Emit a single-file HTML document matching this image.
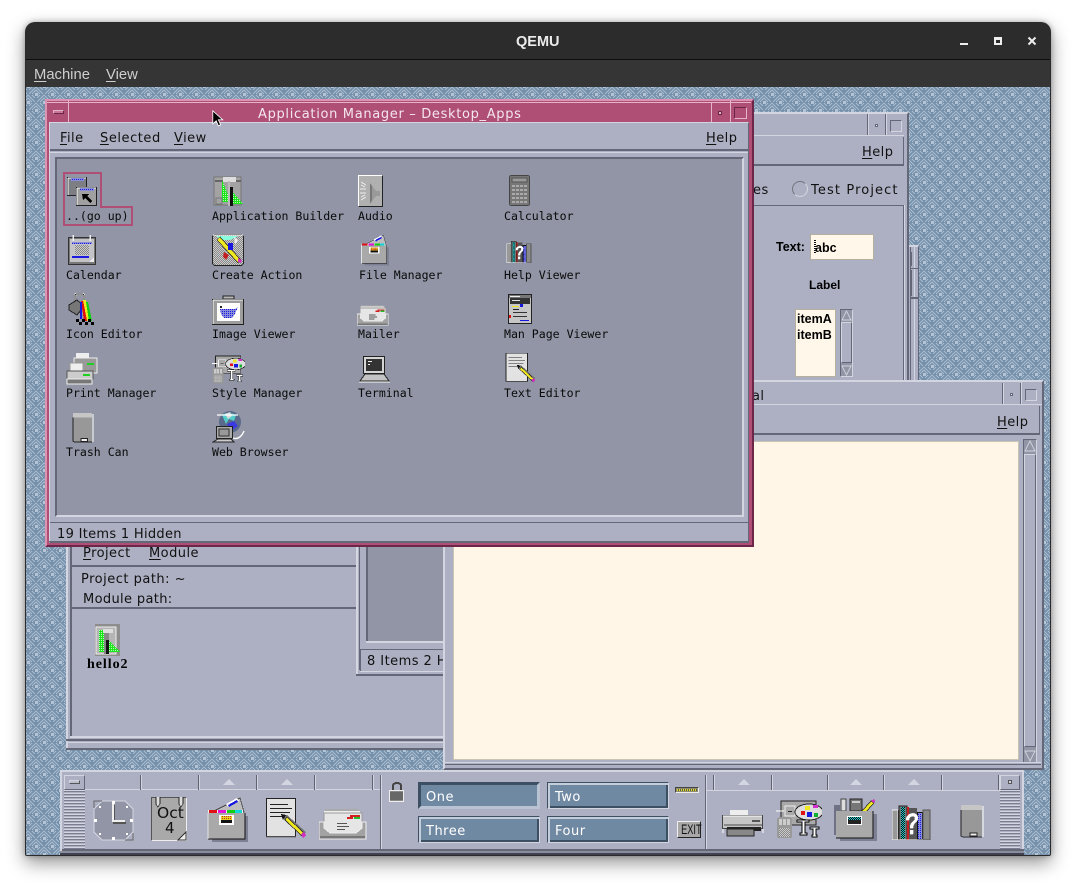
<!DOCTYPE html>
<html><head><meta charset="utf-8"><title>QEMU</title>
<style>
html,body{margin:0;padding:0;background:#fff}
body{width:1076px;height:884px;position:relative;overflow:hidden;font-family:"DejaVu Sans","Liberation Sans",sans-serif;font-size:13px;color:#111}
div,span.a,svg.a{position:absolute;box-sizing:border-box}
.t{position:absolute;white-space:nowrap;line-height:16px}
.m{font-family:"DejaVu Sans Mono","Liberation Mono",monospace;font-size:11.55px;color:#0a0a0a}
.u{font-size:13px;letter-spacing:.45px;color:#111}
u{text-underline-offset:2px}
.b{font-family:"Liberation Sans",sans-serif;font-weight:bold;font-size:12.5px;color:#000}
.base{background:#adb0c2}
.l{background:#d3d6e0}.d{background:#646777}
.ws{background:#7089a3;color:#fff;font-size:13px;letter-spacing:.5px;line-height:29px;padding-left:7px;border:1px solid;border-color:#3d4f62 #d3d6e0 #d3d6e0 #3d4f62;box-shadow:inset 2px 2px 0 #c4cedb,inset -2px -2px 0 #3d4f62}
.ws.on{border:3px solid;border-color:#3d4f62 #b8c2d2 #b8c2d2 #3d4f62;padding-left:5px;line-height:25px;box-shadow:none}
.sep{width:2px;height:15px;background:#5f6272;border-right:1px solid #d3d6e0;top:775px}
.tri{width:0;height:0;border-left:6px solid transparent;border-right:6px solid transparent;border-bottom:6px solid #d3d6e0;top:779px}
.hatch{background:repeating-linear-gradient(#d3d6e0 0 1px,#7a7d8d 1px 2px,#adb0c2 2px 3px)}
svg{shape-rendering:crispEdges}
</style></head><body>
<svg width="0" height="0" style="position:absolute"><defs>
<pattern id="weave" width="16" height="16" patternUnits="userSpaceOnUse" patternTransform="translate(10 7)">
<rect width="16" height="16" fill="#7590ab"/>
<g stroke="#a9bbcd" stroke-width="1" fill="none" shape-rendering="crispEdges">
<path d="M1 4L4 1M1 8L8 1M4 8L8 4M9 12L12 9M9 16L16 9M12 16L16 12M15 4L12 1M15 8L8 1M12 8L8 4M7 12L4 9M7 16L0 9M4 16L0 12"/></g>
<g fill="#b6c5d5"><rect x="7" y="7" width="3" height="3"/><rect width="2" height="2"/><rect x="15" width="1" height="2"/><rect y="15" width="2" height="1"/><rect x="15" y="15" width="1" height="1"/></g>
</pattern>
<pattern id="gd" width="2" height="2" patternUnits="userSpaceOnUse"><rect width="2" height="2" fill="#19e619"/><rect width="1" height="1" fill="#b8f8b8"/></pattern>
<pattern id="bd" width="2" height="2" patternUnits="userSpaceOnUse"><rect width="2" height="2" fill="#8a8ed8"/><rect width="1" height="1" fill="#1a1ae0"/></pattern>
<pattern id="cd" width="2" height="2" patternUnits="userSpaceOnUse"><rect width="2" height="2" fill="#111"/><rect width="1" height="1" fill="#2cc"/><rect x="1" y="1" width="1" height="1" fill="#2cc"/></pattern>
<pattern id="gr" width="2" height="2" patternUnits="userSpaceOnUse"><rect width="2" height="2" fill="#888"/><rect width="1" height="1" fill="#ccc"/><rect x="1" y="1" width="1" height="1" fill="#ccc"/></pattern>
<pattern id="yd" width="2" height="2" patternUnits="userSpaceOnUse"><rect width="2" height="2" fill="#e8d020"/><rect width="1" height="1" fill="#c03020"/></pattern>

<symbol id="fm" viewBox="0 0 42 47">
<rect x="6" y="20" width="36" height="26" fill="#7d8092"/>
<path d="M10 14L34 2l4 14z" fill="#bdbdbd" stroke="#333" stroke-width=".7"/><path d="M20 8l11-6 2 3-11 6z" fill="#fff"/><path d="M22 9l9-5 1 2-9 5z" fill="#1717e0"/>
<path d="M2 14h35v4H2z" fill="#eee"/><rect x="3" y="14" width="8" height="3" fill="#e01010"/><rect x="12" y="14" width="8" height="3" fill="#e010d8"/><rect x="21" y="14" width="8" height="3" fill="#10d010"/><rect x="29" y="14" width="7" height="3" fill="#10d8d8"/>
<rect x="2" y="17" width="37" height="26" fill="#a9a9a9"/><path d="M2 43h37V17" fill="none" stroke="#111" stroke-width="1.2"/><path d="M2 43V17" fill="none" stroke="#e4e4e4"/>
<rect x="13" y="19" width="15" height="10" fill="#fff"/><rect x="15" y="20" width="11" height="4" fill="url(#yd)"/><rect x="15" y="24" width="11" height="3" fill="#111"/>
</symbol>
<symbol id="mail" viewBox="0 0 48 33">
<path d="M6 2h34v5H6z" fill="#aaa"/><path d="M5 4h36v2H5z" fill="#eee"/>
<rect x="5" y="6" width="38" height="22" fill="#e6e6e6" stroke="#999"/><rect x="31" y="8" width="10" height="2" fill="#d02020"/><rect x="35" y="10" width="6" height="2" fill="#20c030"/><rect x="28" y="10" width="6" height="2" fill="#d02020"/>
<rect x="18" y="16" width="10" height="1" fill="#555"/><rect x="18" y="19" width="12" height="1" fill="#555"/><rect x="18" y="22" width="8" height="1" fill="#555"/>
<path d="M0 15v17h47V15h-4v6L37 26H11L5 21v-6z" fill="#a2a2a2" stroke="#eee"/><path d="M1 29h45v3H1z" fill="#777"/><path d="M0 32h47" stroke="#eee"/>
</symbol>
<symbol id="note" viewBox="0 0 40 42">
<rect x=".5" y=".5" width="29" height="38" fill="#e2e2e2" stroke="#222"/><path d="M0 39h30" stroke="#777"/>
<g fill="#222"><rect x="4" y="6" width="18" height="1"/><rect x="4" y="10" width="22" height="1"/><rect x="4" y="14" width="20" height="1"/><rect x="4" y="18" width="12" height="1"/></g>
<path d="M17 18l4-1 19 17-3 5-19-17z" fill="#777"/><path d="M21 19L38 35l-2 3L19 22z" fill="#f0e820" stroke="#222" stroke-width=".7"/><path d="M15 16l5 1-3 5z" fill="#111"/><path d="M35 36l3-2 2 3-3 3z" fill="#d030c0"/>
</symbol>
<symbol id="style" viewBox="0 0 46 38">
<rect x="5" y="1" width="35" height="24" fill="#a9a9a9" stroke="#222"/><rect x="9" y="6" width="10" height="10" fill="#aaa" stroke="#eee"/><rect x="12" y="11" width="4" height="1" fill="#222"/><path d="M0 11h8" stroke="#fff" stroke-width="1.4"/>
<ellipse cx="33" cy="12" rx="14" ry="8" fill="#ddd" stroke="#222"/><rect x="25" y="11" width="4" height="4" fill="#e01010"/><rect x="29" y="6" width="5" height="4" fill="#f0e820"/><rect x="37" y="5" width="5" height="3" fill="#d030d0"/><rect x="31" y="12" width="5" height="5" fill="#1717e0"/><rect x="38" y="13" width="4" height="4" fill="#10b030"/>
<rect x="1" y="17" width="15" height="22" rx="3" fill="#999"/><rect x="3" y="19" width="3" height="6" fill="#ccc"/><rect x="7" y="19" width="3" height="6" fill="#ccc"/><rect x="11" y="19" width="3" height="6" fill="#ccc"/><rect x="3" y="28" width="11" height="9" fill="url(#gr)"/>
<path d="M21 20h12v2h-4v11h2v2h-7v-2h2V22h-5zM34 27h9v2h-3v6h1v2h-5v-2h1v-6h-3z" fill="#fff" stroke="#000" stroke-width=".6"/>
</symbol>
<symbol id="help" viewBox="0 0 40 36">
<rect x="0" y="6" width="6" height="30" fill="#999" stroke="#eee"/><rect x="6" y="6" width="2" height="30" fill="#333"/><rect x="7" y="2" width="8" height="34" fill="#777" stroke="#222"/><rect x="9" y="3" width="4" height="32" fill="url(#cd)"/><rect x="15" y="3" width="2" height="33" fill="#c02020"/><rect x="17" y="4" width="8" height="32" fill="#555"/><rect x="25" y="8" width="6" height="28" fill="#111"/><rect x="26" y="9" width="4" height="26" fill="url(#bd)"/><rect x="31" y="6" width="7" height="30" fill="#8a8a8a" stroke="#555"/><path d="M0 36h31" stroke="#fff" stroke-width="1.5"/>
<path d="M14 16c0-8 12-9 12-2 0 5-5 4-5 10h-3c0-7 5-6 5-10 0-3-6-2-6 2zM18 26h3v4h-3z" fill="#fff" stroke="#eee" stroke-width=".4"/>
</symbol>
<symbol id="trash" viewBox="0 0 24 34">
<path d="M1 2q0-1 1-1h18q2 0 2 2v3H1z" fill="#c6c6c6"/><rect x="1" y="6" width="21" height="26" fill="#989898"/><path d="M1 6v26l2 1h19" fill="none" stroke="#222"/><path d="M23 2v31" stroke="#fff"/><rect x="10" y="29" width="7" height="3" fill="#eee" stroke="#222"/>
</symbol>
</defs></svg>

<!-- QEMU outer window -->
<div style="left:25px;top:22px;width:1026px;height:834px;border-radius:10px 10px 2px 2px;background:#2b2b2b;box-shadow:0 7px 18px rgba(0,0,0,.42),0 0 6px rgba(0,0,0,.28)"></div>
<div style="left:26px;top:23px;width:1024px;height:36px;background:#2c2c2c;border-radius:9px 9px 0 0"></div>
<div style="left:26px;top:59px;width:1024px;height:1px;background:#0e0e0e"></div>
<div style="left:26px;top:60px;width:1024px;height:27px;background:#353535"></div>
<span class="t" style="left:516px;top:33px;color:#ececec;font:bold 14.5px/18px 'Liberation Sans',sans-serif">QEMU</span>
<div style="left:960px;top:43px;width:8px;height:2px;background:#eee"></div>
<div style="left:994px;top:37px;width:8px;height:8px;border:2px solid #eee;border-top-width:3px"></div>
<svg class="a" style="left:1027px;top:36px;shape-rendering:auto" width="10" height="10"><path d="M1.5 1.5l7 7M8.5 1.5l-7 7" stroke="#eee" stroke-width="2"/></svg>
<span class="t" style="left:34px;top:66px;color:#cfcfcf;font:14.8px/18px 'Liberation Sans',sans-serif"><u>M</u>achine</span>
<span class="t" style="left:106px;top:66px;color:#cfcfcf;font:14.8px/18px 'Liberation Sans',sans-serif"><u>V</u>iew</span>

<!-- desktop -->
<svg class="a" style="left:26px;top:87px" width="1024" height="768"><rect width="1024" height="768" fill="url(#weave)"/></svg>

<!-- bottom-left App Builder window -->
<div class="base" style="left:66px;top:540px;width:380px;height:210px"></div>
<div class="l" style="left:66px;top:540px;width:2px;height:210px"></div>
<div class="d" style="left:70px;top:540px;width:2px;height:197px"></div>
<div class="d" style="left:72px;top:565px;width:372px;height:2px"></div>
<span class="t u" style="left:83px;top:546px"><u>P</u>roject</span>
<span class="t u" style="left:149px;top:546px"><u>M</u>odule</span>
<span class="t u" style="left:81px;top:572px;letter-spacing:.5px">Project path: ~</span>
<span class="t u" style="left:83px;top:592px;letter-spacing:.35px">Module path:</span>
<div class="d" style="left:71px;top:607px;width:373px;height:2px"></div>
<div class="l" style="left:70px;top:736px;width:374px;height:2px"></div>
<div class="d" style="left:66px;top:739px;width:378px;height:2px"></div>
<div class="l" style="left:68px;top:742px;width:376px;height:1px"></div>
<div class="d" style="left:66px;top:748px;width:378px;height:2px"></div>
<div style="left:95px;top:624px;width:25px;height:32px;background:#8d8d8d"></div>
<svg class="a" style="left:95px;top:624px" width="25" height="32"><rect x="1" y="3" width="20" height="27" fill="#b5b5b5" stroke="#eee"/><path d="M4 6h6v22H4zM11 14l14 14H11z" fill="url(#gd)"/><rect x="8" y="5" width="10" height="4" fill="#ddd"/><rect x="9" y="9" width="5" height="21" fill="#888"/><rect x="11" y="16" width="3" height="14" fill="#111"/></svg>
<span class="t" style="left:87px;top:657px;font:bold 14px/16px 'Liberation Serif',serif;letter-spacing:.95px;color:#000">hello2</span>

<!-- middle window -->
<div class="base" style="left:356px;top:540px;width:90px;height:136px"></div>
<div class="l" style="left:356px;top:540px;width:2px;height:135px"></div>
<div class="d" style="left:359px;top:540px;width:1px;height:130px"></div>
<div style="left:366px;top:540px;width:80px;height:102px;background:#9195a5;border-left:2px solid #646777"></div>
<div class="l" style="left:366px;top:641px;width:80px;height:2px"></div>
<div class="d" style="left:360px;top:649px;width:84px;height:1px"></div>
<div class="d" style="left:360px;top:650px;width:1px;height:21px"></div>
<span class="t u" style="left:367px;top:654px">8 Items 2 H</span>
<div class="l" style="left:360px;top:671px;width:84px;height:1px"></div>
<div class="d" style="left:356px;top:674px;width:88px;height:2px"></div>

<!-- slice window at right of win1 -->
<div class="base" style="left:905px;top:245px;width:14px;height:140px;border-top:2px solid #d3d6e0;border-right:1px solid #646777"></div>
<div class="d" style="left:910px;top:247px;width:1px;height:136px"></div>
<div class="l" style="left:914px;top:247px;width:1px;height:136px"></div>
<div class="d" style="left:910px;top:268px;width:8px;height:1px"></div>
<div class="d" style="left:910px;top:297px;width:8px;height:2px"></div>
<div class="d" style="left:910px;top:252px;width:2px;height:14px"></div>
<div class="d" style="left:910px;top:270px;width:2px;height:26px"></div>

<!-- win1 -->
<div class="base" style="left:700px;top:112px;width:209px;height:272px;border-top:2px solid #d3d6e0;border-right:2px solid #646777"></div>
<div class="l" style="left:704px;top:135px;width:200px;height:1px"></div>
<div class="d" style="left:867px;top:114px;width:1px;height:21px"></div>
<div class="l" style="left:868px;top:114px;width:1px;height:21px"></div>
<div class="d" style="left:885px;top:114px;width:1px;height:21px"></div>
<div class="l" style="left:886px;top:114px;width:1px;height:21px"></div>
<div style="left:875px;top:124px;width:3px;height:3px;background:#e8e9ef;border:1px solid #646777"></div>
<div style="left:890px;top:120px;width:12px;height:12px;border:1px solid;border-color:#646777 #d3d6e0 #d3d6e0 #646777"></div>
<div class="d" style="left:740px;top:164px;width:164px;height:2px"></div>
<div class="d" style="left:903px;top:137px;width:1px;height:29px"></div>
<span class="t u" style="left:862px;top:145px"><u>H</u>elp</span>
<span class="t u" style="left:753px;top:183px">es</span>
<div style="left:792px;top:181px;width:16px;height:16px;border-radius:50%;border:1px solid #70737f;border-right-color:#d3d6e0;border-bottom-color:#d3d6e0"></div>
<span class="t u" style="left:811px;top:183px;letter-spacing:1.12px">Test Project</span>
<div class="d" style="left:740px;top:205px;width:164px;height:1px"></div>
<div class="d" style="left:903px;top:205px;width:1px;height:180px"></div>
<div class="l" style="left:904px;top:205px;width:1px;height:180px"></div>
<span class="t b" style="left:776px;top:239px">Text:</span>
<div style="left:810px;top:234px;width:64px;height:26px;background:#fff8ea;border:1px solid #b5b09e"></div>
<span class="t b" style="left:815px;top:240px">abc</span>
<div style="left:814px;top:240px;width:2px;height:14px;background:repeating-linear-gradient(#111 0 1px,transparent 1px 2px)"></div>
<span class="t b" style="left:809px;top:277px;font-size:12px">Label</span>
<div style="left:795px;top:309px;width:41px;height:68px;background:#fff8ea;border:1px solid #b5b09e"></div>
<span class="t b" style="left:797px;top:311px;font-size:12.5px">itemA</span>
<span class="t b" style="left:797px;top:327px;font-size:12.5px">itemB</span>
<div style="left:840px;top:309px;width:13px;height:68px;background:#9195a5;border:1px solid;border-color:#646777 #d3d6e0 #d3d6e0 #646777"></div>
<div class="base" style="left:841px;top:322px;width:11px;height:41px;border:1px solid;border-color:#d3d6e0 #646777 #646777 #d3d6e0"></div>
<svg class="a" style="left:841px;top:310px" width="11" height="12"><path d="M5.5 1L10 10H1z" fill="#9195a5" stroke="#d3d6e0"/></svg>
<svg class="a" style="left:841px;top:364px" width="11" height="12"><path d="M5.5 11L10 2H1z" fill="#9195a5" stroke="#d3d6e0"/></svg>

<!-- terminal -->
<div class="base" style="left:443px;top:380px;width:601px;height:390px;border:2px solid;border-color:#d3d6e0 #646777 #646777 #d3d6e0"></div>
<div class="d" style="left:1002px;top:383px;width:1px;height:21px"></div>
<div class="l" style="left:1003px;top:383px;width:1px;height:21px"></div>
<div class="d" style="left:1020px;top:383px;width:1px;height:21px"></div>
<div class="l" style="left:1021px;top:380px;width:1px;height:24px"></div>
<div style="left:1010px;top:393px;width:3px;height:3px;background:#e8e9ef;border:1px solid #646777"></div>
<div style="left:1025px;top:389px;width:12px;height:12px;border:1px solid;border-color:#646777 #d3d6e0 #d3d6e0 #646777"></div>
<div class="l" style="left:445px;top:404px;width:597px;height:1px"></div>
<span class="t u" style="left:752px;top:389px">al</span>
<div class="d" style="left:445px;top:433px;width:595px;height:2px"></div>
<div class="d" style="left:1039px;top:406px;width:1px;height:29px"></div>
<span class="t u" style="left:997px;top:415px"><u>H</u>elp</span>
<div style="left:453px;top:441px;width:566px;height:319px;background:#fff6e8;border:1px solid #c9c3b3"></div>
<div style="left:1023px;top:439px;width:14px;height:324px;background:#9195a5;border:1px solid;border-color:#646777 #d3d6e0 #d3d6e0 #646777"></div>
<div class="base" style="left:1024px;top:454px;width:12px;height:293px;border:1px solid;border-color:#d3d6e0 #646777 #646777 #d3d6e0"></div>
<svg class="a" style="left:1024px;top:440px" width="12" height="13"><path d="M6 1L11 11H1z" fill="#9195a5" stroke="#d3d6e0"/></svg>
<svg class="a" style="left:1024px;top:749px" width="12" height="13"><path d="M6 12L11 2H1z" fill="#9195a5" stroke="#d3d6e0"/></svg>
<div class="l" style="left:445px;top:762px;width:596px;height:1px"></div>
<div class="d" style="left:445px;top:764px;width:596px;height:1px"></div>

<!-- App Manager -->
<div style="left:45px;top:99px;width:709px;height:448px;background:#b04f76;border:2px solid;border-color:#dd93b1 #6b2648 #6b2648 #dd93b1"></div>
<div style="left:47px;top:102px;width:704px;height:1px;background:#e4b4c8"></div>
<div style="left:68px;top:100px;width:1px;height:22px;background:#e4b4c8"></div>
<div style="left:711px;top:103px;width:1px;height:19px;background:#e4b4c8"></div>
<div style="left:730px;top:100px;width:1px;height:22px;background:#e4b4c8"></div>
<div style="left:53px;top:110px;width:11px;height:4px;background:#c9769a;border:1px solid;border-color:#e4b4c8 #6b2648 #6b2648 #e4b4c8"></div>
<div style="left:718px;top:111px;width:4px;height:4px;background:#e4b4c8;border:1px solid #6b2648"></div>
<div style="left:734px;top:107px;width:13px;height:12px;border:1px solid;border-color:#6b2648 #e4b4c8 #e4b4c8 #6b2648"></div>
<span class="t" style="left:258px;top:107px;color:#f3e6ec;font-size:13px;letter-spacing:.67px">Application Manager – Desktop_Apps</span>
<div class="base" style="left:49px;top:122px;width:700px;height:421px;border:1px solid;border-color:#d3d6e0 #646777 #646777 #d3d6e0"></div>
<div class="d" style="left:50px;top:149px;width:698px;height:2px"></div>
<div class="l" style="left:50px;top:152px;width:698px;height:1px"></div>
<span class="t u" style="left:60px;top:131px"><u>F</u>ile</span>
<span class="t u" style="left:100px;top:131px;letter-spacing:.55px"><u>S</u>elected</span>
<span class="t u" style="left:174px;top:131px"><u>V</u>iew</span>
<span class="t u" style="left:706px;top:131px"><u>H</u>elp</span>
<div style="left:55px;top:157px;width:689px;height:360px;background:#9195a5;border:2px solid;border-color:#646777 #d3d6e0 #d3d6e0 #646777"></div>
<div class="d" style="left:50px;top:522px;width:698px;height:1px"></div>
<div class="d" style="left:49px;top:541px;width:700px;height:1px"></div>
<span class="t u" style="left:57px;top:527px;letter-spacing:.3px">19 Items 1 Hidden</span>

<!-- focus outline -->
<svg class="a" style="left:60px;top:170px" width="76" height="58"><path d="M4 3h37v34h31v18H4z" fill="none" stroke="#b04f76" stroke-width="2"/></svg>

<!-- labels -->
<span class="t m" style="left:66px;top:208px">..(go up)</span>
<span class="t m" style="left:212px;top:208px">Application Builder</span>
<span class="t m" style="left:358px;top:208px">Audio</span>
<span class="t m" style="left:504px;top:208px">Calculator</span>
<span class="t m" style="left:66px;top:267px">Calendar</span>
<span class="t m" style="left:212px;top:267px">Create Action</span>
<span class="t m" style="left:359px;top:267px">File Manager</span>
<span class="t m" style="left:504px;top:267px">Help Viewer</span>
<span class="t m" style="left:66px;top:326px">Icon Editor</span>
<span class="t m" style="left:212px;top:326px">Image Viewer</span>
<span class="t m" style="left:358px;top:326px">Mailer</span>
<span class="t m" style="left:504px;top:326px">Man Page Viewer</span>
<span class="t m" style="left:66px;top:385px">Print Manager</span>
<span class="t m" style="left:212px;top:385px">Style Manager</span>
<span class="t m" style="left:358px;top:385px">Terminal</span>
<span class="t m" style="left:504px;top:385px">Text Editor</span>
<span class="t m" style="left:66px;top:444px">Trash Can</span>
<span class="t m" style="left:212px;top:444px">Web Browser</span>

<!-- desktop icons -->
<svg class="a" style="left:66px;top:175px" width="32" height="32"><rect x="1.5" y="2.5" width="19" height="18" fill="#7d7e84" stroke="#222"/><path d="M2 3h18M2 3v17" stroke="#fff"/><rect x="5" y="3" width="13" height="3" fill="url(#bd)"/><rect x="10.5" y="12.5" width="20" height="18" fill="#a0a0a0" stroke="#222"/><path d="M11 13h19M11 13v17" stroke="#fff"/><rect x="14" y="13" width="14" height="3" fill="url(#bd)"/><path d="M16 19h7l-2 2 5 5-2 2-5-5-2 2z" fill="#000"/></svg>
<svg class="a" style="left:213px;top:176px" width="32" height="31"><rect x="1" y="1" width="27" height="28" fill="#a3a3a3" stroke="#777"/><rect x="2" y="4" width="26" height="2" fill="#666"/><path d="M9 4l9 22H9z" fill="url(#gd)"/><path d="M20 16l10 12H20z" fill="url(#gd)"/><rect x="10" y="1" width="13" height="5" fill="#ddd"/><rect x="17" y="11" width="3" height="19" fill="#111"/><rect x="15" y="5" width="2" height="25" fill="#bbb"/><rect x="3" y="22" width="6" height="6" fill="none" stroke="#777"/></svg>
<svg class="a" style="left:358px;top:175px" width="26" height="33"><rect x=".5" y=".5" width="24" height="31" fill="#b0b0b0"/><path d="M.5 31.5V.5h24" fill="none" stroke="#fff"/><path d="M.5 31.5h24V.5" fill="none" stroke="#222"/><path d="M12 8l6 8h4v5h-4l-6 8z" fill="#999"/><path d="M12 8l2 3v14l-2 4z" fill="#777"/><g stroke="#eee"><path d="M3 7l5 3M2 14h6M2 18h6M3 25l5-3M3 10l4 2M3 22l4-2"/></g></svg>
<svg class="a" style="left:509px;top:175px" width="23" height="32"><rect x=".5" y=".5" width="20" height="30" rx="2" fill="#777" stroke="#444"/><rect x="3" y="3" width="15" height="4" fill="#999" stroke="#555"/><g fill="#aaa"><rect x="3" y="10" width="3" height="2"/><rect x="7" y="10" width="3" height="2"/><rect x="11" y="10" width="3" height="2"/><rect x="15" y="10" width="3" height="2"/><rect x="3" y="14" width="3" height="2"/><rect x="7" y="14" width="3" height="2"/><rect x="11" y="14" width="3" height="2"/><rect x="15" y="14" width="3" height="2"/><rect x="3" y="18" width="3" height="2"/><rect x="7" y="18" width="3" height="2"/><rect x="11" y="18" width="3" height="2"/><rect x="15" y="18" width="3" height="2"/><rect x="3" y="22" width="3" height="2"/><rect x="7" y="22" width="3" height="2"/><rect x="11" y="22" width="3" height="2"/><rect x="15" y="22" width="3" height="2"/><rect x="3" y="26" width="3" height="2"/><rect x="7" y="26" width="3" height="2"/><rect x="11" y="26" width="3" height="2"/><rect x="15" y="26" width="3" height="2"/></g></svg>
<svg class="a" style="left:68px;top:235px" width="29" height="31"><rect x=".5" y="2.5" width="27" height="27" fill="#777" stroke="#333"/><rect x="2" y="4" width="24" height="23" fill="#c4c4c8"/><rect x="4" y="7" width="20" height="2" fill="url(#bd)"/><rect x="7" y="10" width="14" height="10" fill="url(#gr)"/><rect x="4" y="21" width="17" height="2" fill="#1a1ae0"/><path d="M26 27l-5 0 5-5z" fill="#eee"/><path d="M5 0v6M22 0v6" stroke="#eee" stroke-width="1.5"/></svg>
<svg class="a" style="left:212px;top:234px" width="33" height="33"><rect x=".5" y=".5" width="31" height="31" rx="3" fill="url(#gr)" stroke="#222"/><path d="M1 1h30" stroke="#fff"/><path d="M4 2h22l-8 4h-8z" fill="#8fd"/><path d="M8 3l21 23-3 3L5 6z" fill="#f0e820" stroke="#222" stroke-width=".7"/><path d="M16 9h5v7h-5z" fill="#1717e0"/><path d="M12 18l5 3-3 5-3-3z" fill="#c02020"/><path d="M26 24l4 2-1 3-3-1z" fill="#d030c0"/><path d="M22 3l4 3-3 5z" fill="#eee"/></svg>
<svg class="a" style="left:360px;top:234px" width="29" height="32"><use href="#fm" width="29" height="32"/></svg>
<svg class="a" style="left:506px;top:240px" width="27" height="23"><use href="#help" width="27" height="23"/></svg>
<svg class="a" style="left:68px;top:293px" width="29" height="32"><path d="M7 9V3q0-2 2-2h5q2 0 2 2v8" fill="none" stroke="#fff" stroke-width="2"/><path d="M7 9V3q0-2 2-2h5q2 0 2 2v8" fill="none" stroke="#222"/><path d="M1 12l8-5 7 6-7 9-8-5z" fill="#777" stroke="#222"/><path d="M13 8h4l3 20h-4z" fill="#e01010"/><path d="M15 7h3l4 21h-3z" fill="#f0e820"/><path d="M18 9h2l4 19h-3z" fill="#10d010"/><path d="M12 9h2v17h-2z" fill="#1717e0"/><g fill="#000"><rect x="8" y="26" width="3" height="3"/><rect x="14" y="26" width="3" height="3"/><rect x="20" y="26" width="3" height="3"/><rect x="11" y="29" width="3" height="3"/><rect x="17" y="29" width="3" height="3"/><rect x="23" y="29" width="3" height="3"/></g></svg>
<svg class="a" style="left:212px;top:295px" width="33" height="31"><path d="M11 5l5-3 5 3" fill="none" stroke="#222"/><rect x="11" y="1" width="11" height="3" fill="#bbb" stroke="#222"/><rect x=".5" y="4.5" width="31" height="25" fill="#9d9d9d" stroke="#222"/><path d="M1 5h30M1 5v24" stroke="#fff"/><rect x="5" y="8" width="23" height="18" fill="#fff"/><path d="M8 14h15l3-2-3 7-3 4h-8l-3-4z" fill="url(#bd)"/><rect x="8" y="11" width="2" height="2" fill="#222"/></svg>
<svg class="a" style="left:357px;top:302px" width="32" height="26"><use href="#mail" width="32" height="26"/></svg>
<svg class="a" style="left:508px;top:294px" width="25" height="31"><rect x=".5" y=".5" width="23" height="29" fill="#c6c6c6" stroke="#222"/><rect x="1" y="1" width="22" height="3" fill="#777"/><rect x="2" y="4" width="20" height="6" fill="#333"/><rect x="4" y="6" width="8" height="1" fill="#ddd"/><rect x="2" y="2" width="10" height="1" fill="#eee"/><rect x="4" y="12" width="7" height="1" fill="#f0e820"/><rect x="12" y="10" width="3" height="3" fill="#1717e0"/><rect x="5" y="15" width="6" height="1" fill="#222"/><rect x="5" y="18" width="14" height="1" fill="#333"/><rect x="1" y="21" width="2" height="3" fill="#e01010"/><rect x="5" y="22" width="14" height="1" fill="#333"/><rect x="12" y="26" width="9" height="1" fill="#1717e0"/></svg>
<svg class="a" style="left:66px;top:353px" width="32" height="32"><rect x="10" y="0" width="13" height="9" fill="#eee"/><rect x="8" y="5" width="23" height="15" fill="#999" stroke="#eee"/><rect x="21" y="10" width="7" height="2" fill="#20d020"/><rect x="4" y="10" width="13" height="10" fill="#eee" stroke="#999"/><rect x="1" y="18" width="26" height="8" fill="#ccc" stroke="#555"/><rect x="17" y="21" width="7" height="2" fill="#20d020"/><rect x="1" y="26" width="25" height="5" fill="#777" stroke="#eee"/></svg>
<svg class="a" style="left:212px;top:353px" width="33" height="32"><use href="#style" width="33" height="32"/></svg>
<svg class="a" style="left:358px;top:355px" width="33" height="28"><rect x="5.5" y="1.5" width="21" height="17" fill="#d6d6d6" stroke="#222"/><rect x="8" y="4" width="16" height="12" fill="#333"/><rect x="10" y="6" width="4" height="1" fill="#eee"/><rect x="10" y="9" width="2" height="1" fill="#eee"/><path d="M7 19h19l5 7H2z" fill="#c4c4c4" stroke="#222"/><path d="M1 27h31" stroke="#fff"/></svg>
<svg class="a" style="left:505px;top:353px" width="31" height="31"><use href="#note" width="31" height="31"/></svg>
<svg class="a" style="left:72px;top:411px" width="22" height="33"><use href="#trash" width="22" height="33"/></svg>
<svg class="a" style="left:212px;top:411px;shape-rendering:auto" width="33" height="33"><circle cx="18" cy="11" r="11" fill="#5a6a8a"/><path d="M10 4q6-4 14 0l-2 6-5-2-3 5z" fill="#5cc"/><path d="M15 13l7-3 4 5-7 5z" fill="#3a3ae0"/><path d="M13 3l5-2 2 4-4 3z" fill="#ddd"/><path d="M5 4h21" stroke="#fff" stroke-width="1.2"/><rect x="4.5" y="15.5" width="16" height="12" fill="#aaa" stroke="#222"/><rect x="7" y="18" width="10" height="7" fill="#999" stroke="#333"/><path d="M1 31l5-3h13l3 3z" fill="#ccc" stroke="#222"/><path d="M21 27c5 2 9-2 11-7" fill="none" stroke="#fff" stroke-width="1.4"/></svg>

<!-- front panel -->
<div class="base" style="left:60px;top:770px;width:964px;height:85px;border-top:2px solid #d3d6e0;border-left:2px solid #d3d6e0"></div>
<div class="d" style="left:62px;top:849px;width:962px;height:2px"></div>
<div style="left:60px;top:851px;width:964px;height:2px;background:#8a8d9c"></div>
<div style="left:60px;top:853px;width:964px;height:2px;background:#3f4250"></div>
<div class="l" style="left:1022px;top:772px;width:2px;height:77px"></div>
<div class="l" style="left:85px;top:789px;width:295px;height:1px"></div>
<div class="l" style="left:706px;top:790px;width:294px;height:1px"></div>
<div class="d" style="left:380px;top:775px;width:1px;height:74px"></div>
<div class="l" style="left:381px;top:775px;width:1px;height:74px"></div>
<div class="d" style="left:705px;top:775px;width:1px;height:74px"></div>
<div class="l" style="left:706px;top:775px;width:1px;height:74px"></div>
<div class="base" style="left:64px;top:775px;width:21px;height:15px;border:1px solid;border-color:#d3d6e0 #646777 #646777 #d3d6e0"></div>
<div style="left:69px;top:780px;width:11px;height:4px;background:#bcbfce;border:1px solid;border-color:#d3d6e0 #555 #555 #d3d6e0"></div>
<div class="hatch" style="left:64px;top:790px;width:21px;height:59px"></div>
<div class="base" style="left:1000px;top:775px;width:20px;height:15px;border:1px solid;border-color:#d3d6e0 #646777 #646777 #d3d6e0"></div>
<div style="left:1008px;top:780px;width:4px;height:4px;background:#d3d6e0;border:1px solid #555"></div>
<div class="hatch" style="left:1000px;top:790px;width:20px;height:59px"></div>
<div class="sep" style="left:140px"></div><div class="sep" style="left:198px"></div><div class="sep" style="left:256px"></div><div class="sep" style="left:314px"></div><div class="sep" style="left:372px"></div>
<div class="sep" style="left:713px"></div><div class="sep" style="left:771px"></div><div class="sep" style="left:827px"></div><div class="sep" style="left:883px"></div><div class="sep" style="left:941px"></div><div class="sep" style="left:998px"></div>
<div class="tri" style="left:223px"></div><div class="tri" style="left:281px"></div><div class="tri" style="left:738px"></div><div class="tri" style="left:850px"></div><div class="tri" style="left:908px"></div>

<!-- panel icons -->
<svg class="a" style="left:93px;top:800px" width="41" height="41"><polygon points="9,1 32,1 40,9 40,32 32,40 9,40 1,32 1,9" fill="#9195a5"/><path d="M9 1H32L40 9V32L32 40H9L1 32V9Z" fill="none" stroke="#d3d6e0"/><path d="M1 8V1h8M40 33v7h-8" fill="none" stroke="#666"/><g fill="#fff"><rect x="19" y="1" width="3" height="3"/><rect x="19" y="37" width="3" height="3"/><rect x="1" y="19" width="3" height="3"/><rect x="37" y="19" width="3" height="3"/><rect x="6" y="6" width="2" height="2"/><rect x="33" y="6" width="2" height="2"/><rect x="6" y="33" width="2" height="2"/><rect x="33" y="33" width="2" height="2"/></g><rect x="20" y="5" width="2" height="18" fill="#555"/><rect x="20" y="22" width="13" height="2" fill="#555"/><rect x="19" y="4" width="2" height="18" fill="#f0f0f0"/><rect x="19" y="20" width="13" height="2" fill="#f0f0f0"/></svg>
<div style="left:151px;top:797px;width:36px;height:44px;background:#a9a9a9;border:1px solid #555;border-right-color:#eee;border-bottom-color:#eee"></div>
<span class="t" style="left:157px;top:803px;font:15.5px/20px 'DejaVu Sans',sans-serif;color:#111">Oct</span>
<span class="t" style="left:165px;top:819px;font:15px/18px 'DejaVu Sans',sans-serif;color:#111">4</span>
<svg class="a" style="left:151px;top:796px" width="36" height="46"><path d="M5 1v7l2 3 2-3V1M28 1v7l2 3 2-3V1" fill="#ddd" stroke="#222" stroke-width=".7"/><path d="M35 36v8h-8z" fill="#eee" stroke="#333"/></svg>
<svg class="a" style="left:206px;top:796px" width="42" height="47"><use href="#fm" width="42" height="47"/></svg>
<svg class="a" style="left:266px;top:798px" width="40" height="42"><use href="#note" width="40" height="42"/></svg>
<svg class="a" style="left:319px;top:807px" width="48" height="33"><use href="#mail" width="48" height="33"/></svg>

<!-- workspace -->
<svg class="a" style="left:389px;top:782px" width="16" height="20"><path d="M4 9V4q0-3 4-3t4 3v5" fill="none" stroke="#444" stroke-width="2"/><rect x=".5" y="8.5" width="14" height="11" fill="#8a8a8a" stroke="#eee"/><path d="M1 11h13M1 13h13M1 15h13M1 17h13" stroke="#444"/></svg>
<div class="ws on" style="left:418px;top:782px;width:122px;height:27px">One</div>
<div class="ws" style="left:547px;top:782px;width:122px;height:27px">Two</div>
<div class="ws" style="left:418px;top:816px;width:122px;height:27px">Three</div>
<div class="ws" style="left:547px;top:816px;width:122px;height:27px">Four</div>
<div style="left:675px;top:787px;width:24px;height:6px;background:#8d8d70;border:1px solid;border-color:#444 #eee #eee #444"></div>
<div style="left:677px;top:789px;width:20px;height:2px;background:repeating-linear-gradient(90deg,#e8e020 0 1px,#555 1px 2px)"></div>
<div style="left:677px;top:821px;width:24px;height:17px;background:#a8a8a8;border:1px solid;border-color:#eee #222 #222 #eee"></div>
<span class="t" style="left:677px;top:821px;width:24px;text-align:center;font:14px/17px 'Liberation Sans',sans-serif;color:#111;transform:scaleX(.66)">EXIT</span>

<!-- right panel icons -->
<svg class="a" style="left:722px;top:809px" width="43" height="28"><rect x="8" y="1" width="18" height="6" fill="#eee"/><rect x=".5" y="6.5" width="40" height="13" fill="#c6c6c6" stroke="#444"/><path d="M1 7h39" stroke="#fff"/><rect x="30" y="11" width="8" height="2" fill="#555"/><rect x="2" y="15" width="38" height="2" fill="#888"/><rect x="5" y="18" width="34" height="4" fill="#222"/><rect x="5" y="20" width="27" height="7" fill="#888" stroke="#222"/><path d="M1 20v4M41 20v4" stroke="#fff"/></svg>
<svg class="a" style="left:776px;top:800px" width="46" height="38"><use href="#style" width="46" height="38"/></svg>
<svg class="a" style="left:834px;top:798px" width="44" height="46"><rect x="0" y="7" width="6" height="30" fill="#6f7284"/><rect x="6" y="16" width="37" height="27" fill="#7d8092"/><rect x="7" y="1" width="5" height="12" fill="#ddd" stroke="#444"/><rect x="16" y="1" width="12" height="12" fill="#777" stroke="#222"/><rect x="18" y="3" width="8" height="2" fill="#ccc"/><path d="M28 13l9-10 3 2-9 10z" fill="#f0e820" stroke="#222" stroke-width=".7"/><path d="M37 3l3-2 1 2-1 2z" fill="#d030c0"/><rect x="2" y="13" width="37" height="27" fill="#a9a9a9"/><path d="M2 40h37V13" fill="none" stroke="#111" stroke-width="1.2"/><rect x="13" y="18" width="15" height="9" fill="#fff"/><rect x="14" y="19" width="13" height="3" fill="url(#cd)"/><rect x="14" y="22" width="13" height="4" fill="#222"/></svg>
<svg class="a" style="left:892px;top:804px" width="40" height="36"><use href="#help" width="40" height="36"/></svg>
<svg class="a" style="left:960px;top:804px" width="24" height="34"><use href="#trash" width="24" height="34"/></svg>

<!-- cursor -->
<svg class="a" style="left:212px;top:110px;shape-rendering:auto" width="12" height="18"><path d="M.8.8v13l3.4-3 2.2 5 2.2-1-2.2-5h4.4z" fill="#000" stroke="#fff" stroke-width=".8"/></svg>
</body></html>
